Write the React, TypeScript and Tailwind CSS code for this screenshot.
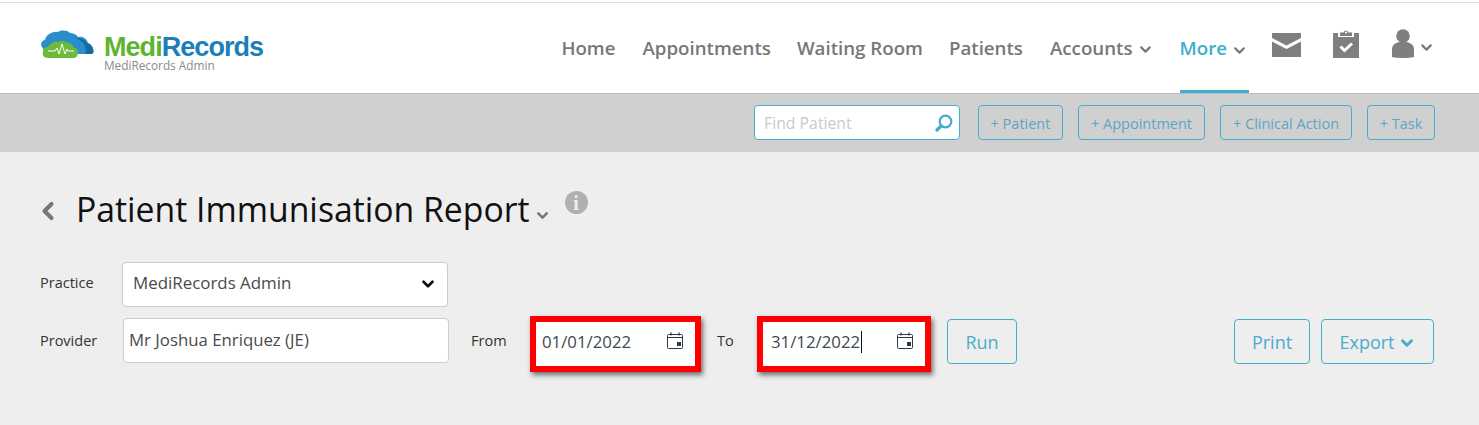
import { ChevronDown, ChevronLeft } from "lucide-react";

const NAV_LINK = "text-[18.7px] font-semibold text-[#777777]";
const ACTION_BTN =
  "flex h-[35px] items-center justify-center rounded-[4px] border border-[#45aed0] pt-[2px] text-[14.5px] text-[#5ba6c4]";
const OUTLINE_BTN =
  "mt-[3px] flex h-[45px] items-center justify-center rounded-[4px] border border-[#45aed0] pt-[1px] text-[18px] text-[#4aacd0]";
const FIELD_LABEL = "text-[14.5px] text-[#333333]";

function Logo() {
  return (
    <div className="flex items-start">
      <svg width="54" height="30" viewBox="0 0 54 30" className="mt-[1px] shrink-0">
        <path
          d="M2 17c-2-3 0-7 3-7 1-5 7-9 13-8 3-2 9-2 12 1 3 0 6 1 8 4 5-1 9 2 10 6 3 1 6 4 5 8 0 2-1 3-3 3H10C6 24 4 20 2 17z"
          fill="#2a8ecb"
        />
        <path d="M33 9c6-1 11 3 12 8 1 3 1 6 0 7h7c2-1 2-3 1-5-1-3-3-5-6-6-2-4-8-6-14-4z" fill="#176a9f" />
        <path
          d="M8 28c-4 0-6-3-5-6 0-3 2-5 5-5 2-4 6-6 10-5 3-2 7-1 10 1 3 0 5 2 6 5 3 0 4 2 4 5s-2 5-5 5H8z"
          fill="#6dbb3c"
        />
        <path d="M8 21h7l2-3 2 6 3-10 3 10 2-5 1 2h6" fill="none" stroke="#ffffff" strokeWidth="1" />
      </svg>
      <div className="mt-[6px] ml-[10px] flex flex-col">
        <div className="h-[24px] font-['Liberation_Sans',sans-serif] text-[27px] leading-[25px] font-bold tracking-[-0.95px] whitespace-nowrap">
          <span className="text-[#5cb531]">Medi</span>
          <span className="text-[#1c7fb8]">Records</span>
        </div>
        <div className="text-[11.8px] leading-[13px] text-[#8a8a8a]">MediRecords Admin</div>
      </div>
    </div>
  );
}

function MailIcon() {
  return (
    <svg width="29" height="24" viewBox="0 0 29 24">
      <path d="M0 0h29v5L14.5 12.5 0 5z" fill="#7f7f7f" />
      <path d="M0 8.5l14.5 7.5L29 8.5V24H0z" fill="#7f7f7f" />
    </svg>
  );
}

function ClipboardIcon() {
  return (
    <svg width="26" height="29" viewBox="0 0 26 29">
      <path d="M0 4h5v4h16V4h5v25H0z" fill="#7f7f7f" />
      <path d="M7 7V3.5h3.5a2.6 2.6 0 0 1 5 0H19V7z" fill="#7f7f7f" />
      <circle cx="13" cy="3.6" r="1.1" fill="#ffffff" />
      <path d="M7.5 17.5l4 4 7.5-7" fill="none" stroke="#ffffff" strokeWidth="3" />
    </svg>
  );
}

function UserIcon() {
  return (
    <svg width="22" height="29" viewBox="0 0 22 29">
      <circle cx="11" cy="7" r="6.8" fill="#7f7f7f" />
      <path d="M0 28v-7c0-5 3-7 7-8h8c4 1 7 3 7 8v7c-6 1.300-16 1.300-22 0z" fill="#7f7f7f" />
    </svg>
  );
}

function SearchIcon() {
  return (
    <svg width="18" height="18" viewBox="0 0 18 18">
      <circle cx="10.500" cy="7.500" r="5.800" fill="none" stroke="#45aed0" strokeWidth="2.200" />
      <path d="M6 12l-4 4" stroke="#45aed0" strokeWidth="3.200" strokeLinecap="round" />
    </svg>
  );
}

function CalendarIcon() {
  return (
    <svg width="16" height="17" viewBox="0 0 16 17" className="mb-[8px] shrink-0">
      <rect x="0.500" y="2.500" width="15" height="14" rx="1" fill="none" stroke="#2b3a42" />
      <path d="M1 5.500h14" stroke="#2b3a42" />
      <path d="M4 0.500v3M12 0.500v3" stroke="#2b3a42" strokeWidth="1.200" />
      <rect x="10" y="10" width="4" height="4" fill="#2b3a42" />
    </svg>
  );
}

function DateField({ value, caret, className }: { value: string; caret?: boolean; className: string }) {
  return (
    <div
      className={`box-border flex h-[56px] items-center justify-between border-[6px] border-[#ff0000] bg-white pr-[12px] shadow-[2px_3px_5px_rgba(0,0,0,0.55)] ${className}`}
    >
      <span className="flex items-center pb-[5px] text-[16.8px] leading-[24px] text-[#3d4a52]">
        {value}
        {caret && <span className="ml-[1px] h-[22px] w-px bg-[#111111]" />}
      </span>
      <CalendarIcon />
    </div>
  );
}

export default function App() {
  return (
    <div className="h-[425px] w-[1479px] overflow-hidden bg-[#eeeeee] font-['Open_Sans',sans-serif]">
      <div className="h-[3px] border-b border-[#dddddd] bg-white" />

      <header className="flex h-[91px] items-start justify-between border-b border-[#bdbdbd] bg-white pr-[44px] pl-[40px]">
        <div className="pt-[26px]">
          <Logo />
        </div>
        <nav className="flex h-full items-start">
          <a className={`${NAV_LINK} mt-[31px]`}>Home</a>
          <a className={`${NAV_LINK} mt-[31px] ml-[27px]`}>Appointments</a>
          <a className={`${NAV_LINK} mt-[31px] ml-[26px]`}>Waiting Room</a>
          <a className={`${NAV_LINK} mt-[31px] ml-[26px]`}>Patients</a>
          <a className={`${NAV_LINK} mt-[31px] ml-[27px] flex items-center gap-[4px]`}>
            Accounts
            <ChevronDown size={17} strokeWidth={3} className="mt-[2px] text-[#777777]" />
          </a>
          <a className="ml-[26px] flex h-full items-start gap-[4px] border-b-[3px] border-[#3eaecf] pt-[31px] pr-[1px] text-[18.7px] font-semibold text-[#3eaecf]">
            More
            <ChevronDown size={17} strokeWidth={3} className="mt-[8px] text-[#777777]" />
          </a>
          <span className="mt-[30px] ml-[23px]">
            <MailIcon />
          </span>
          <span className="mt-[26px] ml-[32px]">
            <ClipboardIcon />
          </span>
          <span className="mt-[26px] ml-[33px] flex items-start gap-[4px]">
            <UserIcon />
            <ChevronDown size={17} strokeWidth={3} className="mt-[10px] text-[#777777]" />
          </span>
        </nav>
      </header>

      <div className="flex h-[58px] items-start justify-end bg-[#d0d0d0] pt-[11px] pr-[44px]">
        <div className="flex h-[35px] w-[206px] items-center justify-between rounded-[4px] border border-[#45aed0] bg-white pr-[6px] pl-[9px] text-[15.8px] text-[#c9c9c9]">
          <span className="pt-[2px]">Find Patient</span>
          <SearchIcon />
        </div>
        <button className={`${ACTION_BTN} ml-[18px] w-[85px]`}>+ Patient</button>
        <button className={`${ACTION_BTN} ml-[15px] w-[127px]`}>+ Appointment</button>
        <button className={`${ACTION_BTN} ml-[15px] w-[132px]`}>+ Clinical Action</button>
        <button className={`${ACTION_BTN} ml-[15px] w-[68px]`}>+ Task</button>
      </div>

      <main className="px-[40px]">
        <div className="flex h-[110px] items-start pt-[34px]">
          <ChevronLeft size={28} strokeWidth={3.500} className="mt-[11px] -ml-[6px] text-[#777777]" />
          <h1 className="ml-[14px] text-[33.75px] leading-[46px] font-normal whitespace-nowrap text-[#111111]">
            Patient Immunisation Report
          </h1>
          <ChevronDown size={17} strokeWidth={3.500} className="mt-[21px] ml-[4px] text-[#777777]" />
          <span className="mt-[5px] ml-[14px] flex h-[23px] w-[23px] items-center justify-center rounded-full bg-[#b0b0b0] font-['Liberation_Serif',serif] text-[20px] font-bold text-[#eeeeee]">
            i
          </span>
        </div>

        <div className="flex items-center">
          <span className={`${FIELD_LABEL} w-[82px] pb-[3px]`}>Practice</span>
          <div className="flex h-[45px] w-[326px] items-center justify-between rounded-[4px] border border-[#cccccc] bg-white pr-[10px] pb-[3px] pl-[10px] text-[16.9px] text-[#4a4a4a]">
            MediRecords Admin
            <ChevronDown size={18} strokeWidth={3.500} className="mt-[2px] text-[#111111]" />
          </div>
        </div>

        <div className="mt-[9px] flex items-start">
          <span className={`${FIELD_LABEL} mt-[14px] w-[83px]`}>Provider</span>
          <div className="mt-[2px] flex h-[45px] w-[326px] items-center rounded-[4px] border border-[#cccccc] bg-white pb-[1px] pl-[5px] text-[16.8px] text-[#4a4a4a]">
            Mr Joshua Enriquez (JE)
          </div>
          <span className={`${FIELD_LABEL} mt-[14px] ml-[22px] w-[59px]`}>From</span>
          <DateField value="01/01/2022" className="w-[171px] pl-[6px]" />
          <span className={`${FIELD_LABEL} mt-[14px] ml-[16px] w-[40px]`}>To</span>
          <DateField value="31/12/2022" caret className="w-[174px] pl-[8px]" />
          <button className={`${OUTLINE_BTN} ml-[16px] w-[70px]`}>Run</button>
          <button className={`${OUTLINE_BTN} ml-auto w-[76px]`}>Print</button>
          <button className={`${OUTLINE_BTN} mr-[5px] ml-[11px] w-[113px] gap-[3px]`}>
            Export
            <ChevronDown size={18} strokeWidth={4} className="mt-[2px]" />
          </button>
        </div>
      </main>
    </div>
  );
}
